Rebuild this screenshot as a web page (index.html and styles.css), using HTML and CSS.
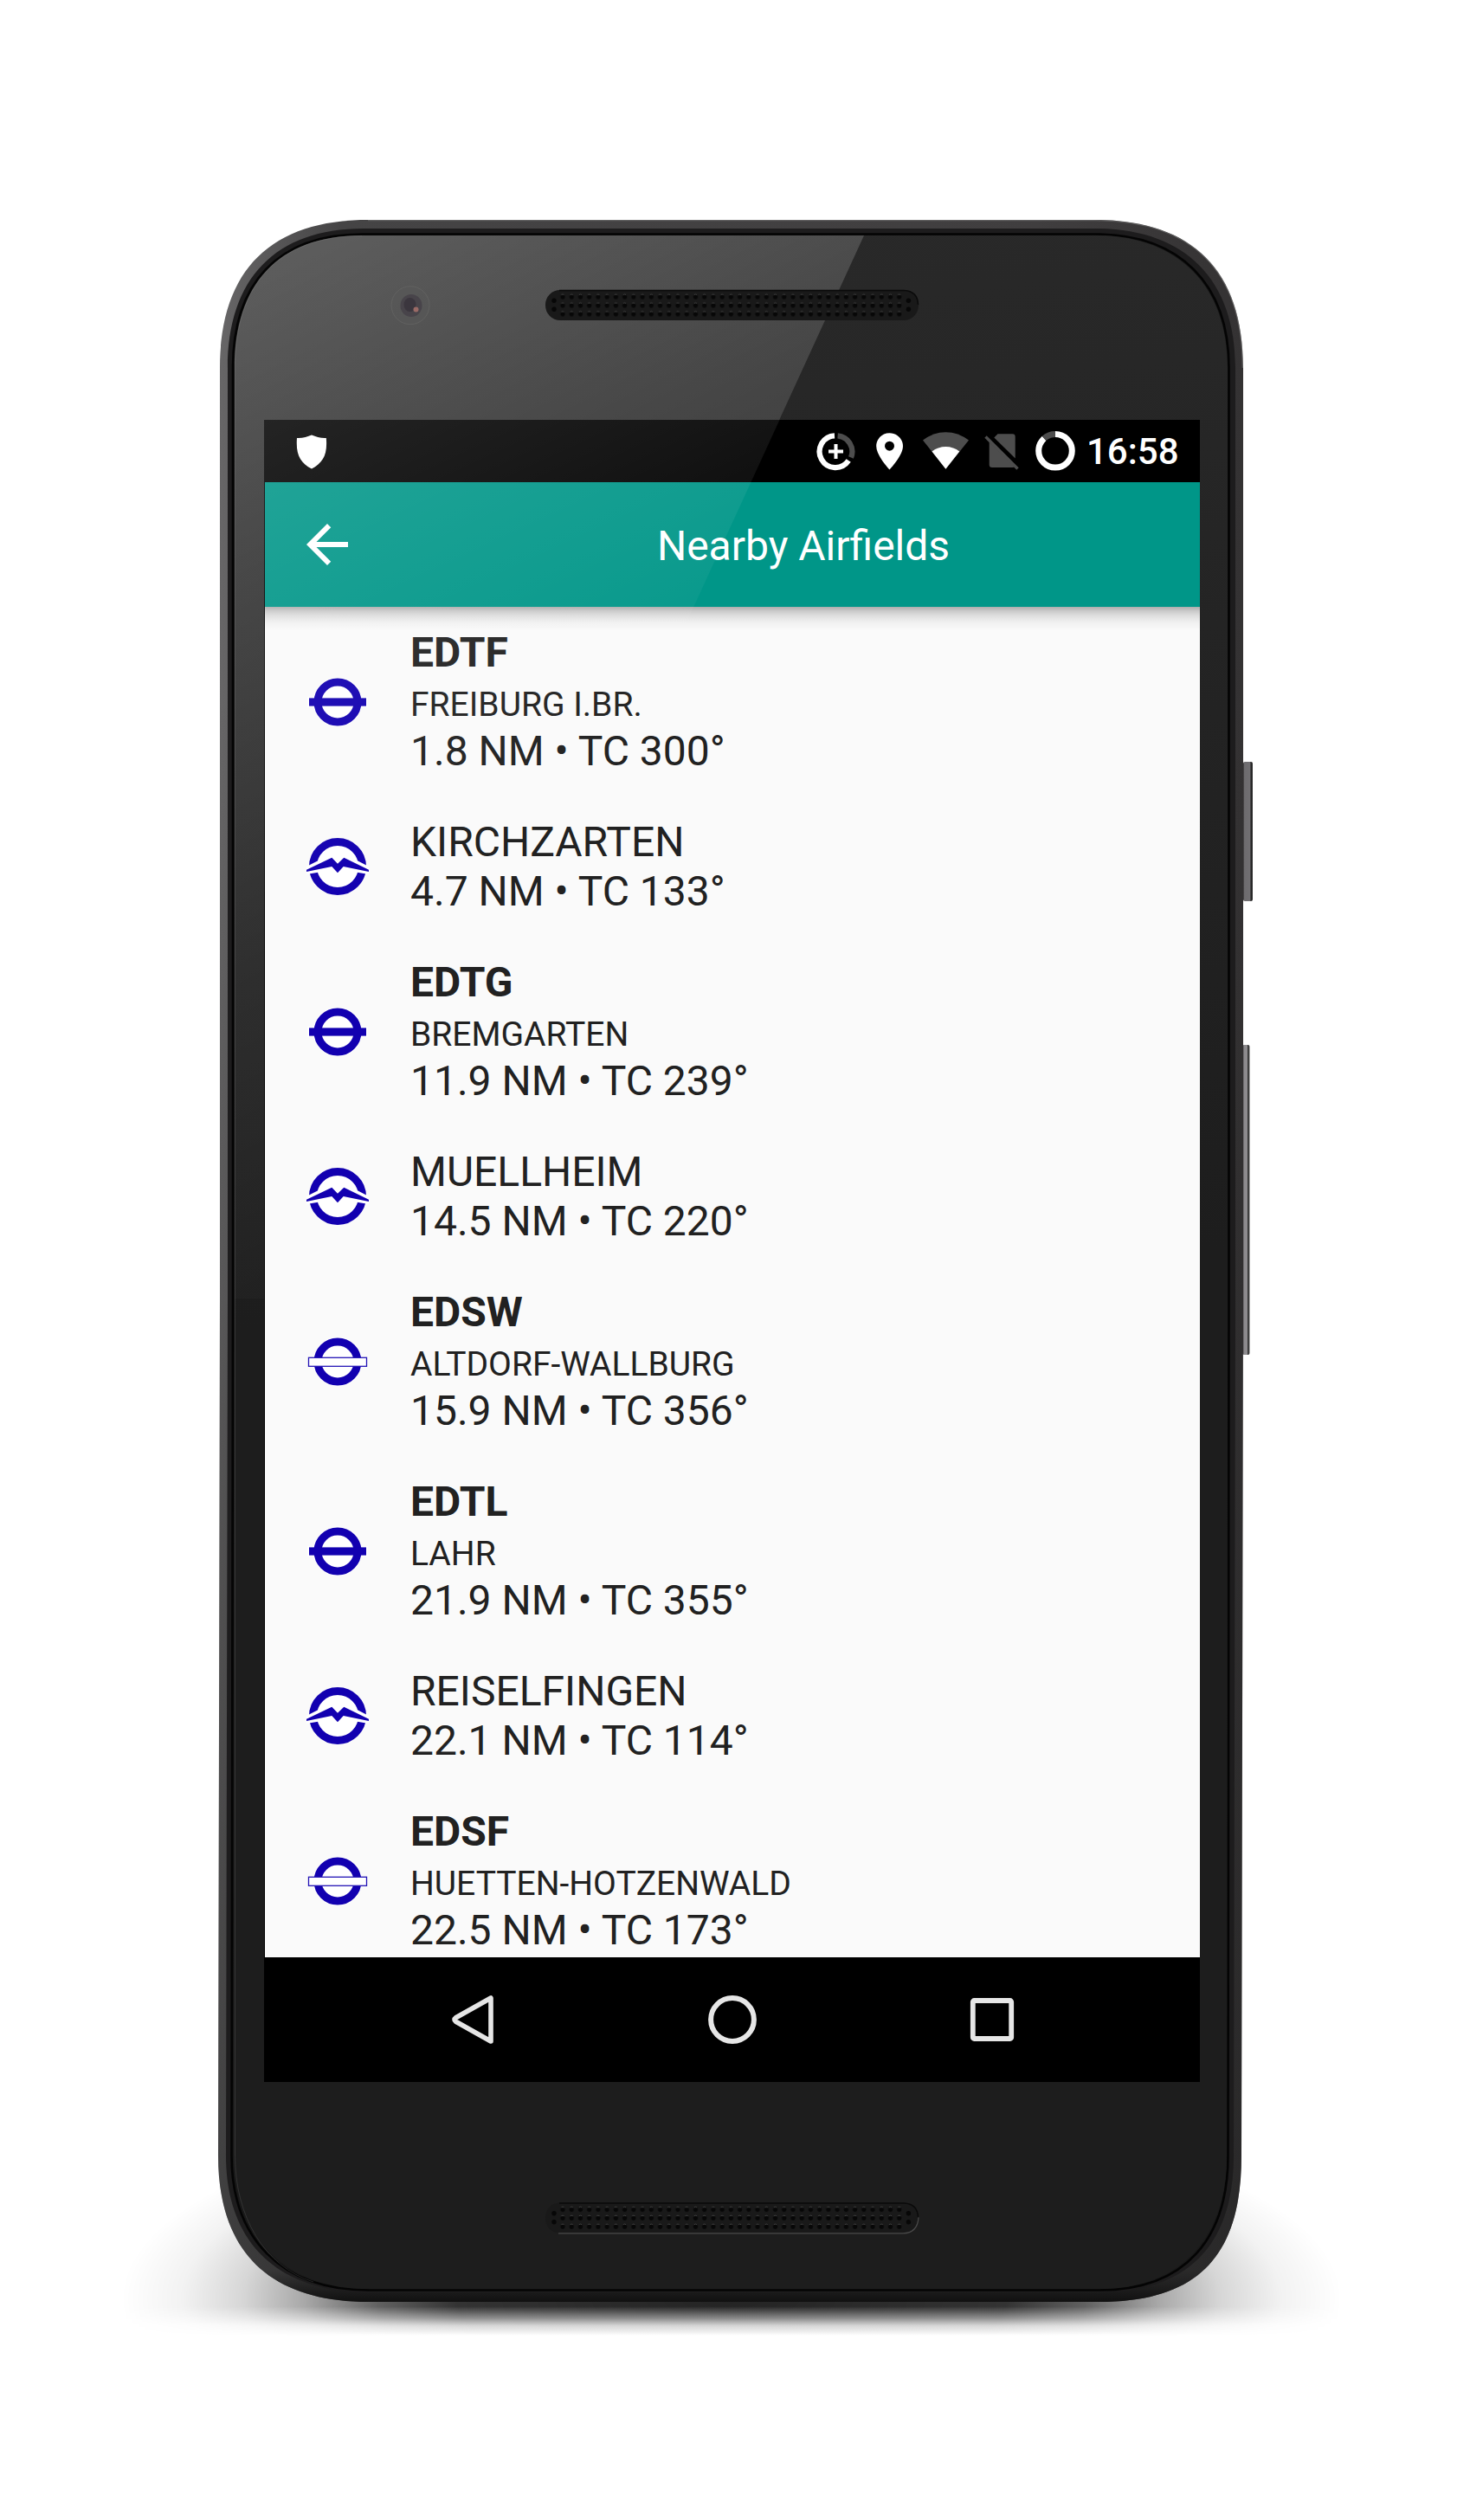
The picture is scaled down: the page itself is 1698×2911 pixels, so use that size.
FILE: index.html
```html
<!DOCTYPE html>
<html lang="en">
<head>
<meta charset="utf-8">
<title>Nearby Airfields</title>
<link rel="stylesheet" href="styles.css">
</head>
<body>
<svg class="defs" aria-hidden="true">
  <symbol id="paved" viewBox="-36 -36 72 72">
    <circle r="28.5" fill="#fff"/><rect x="-34.5" y="-6" width="69" height="12" fill="#fff"/>
    <circle r="23" fill="none" stroke="#1200b0" stroke-width="9"/>
    <rect x="-33" y="-4.6" width="66" height="9.2" fill="#1200b0"/>
  </symbol>
  <symbol id="grass" viewBox="-36 -36 72 72">
    <circle r="28.5" fill="#fff"/>
    <circle r="23" fill="none" stroke="#1200b0" stroke-width="9"/>
    <rect x="-33.5" y="-4.7" width="67" height="10" fill="#fff" stroke="#2414b6" stroke-width="1.3"/>
  </symbol>
  <symbol id="glider" viewBox="-36 -36 72 72">
    <circle r="28.5" fill="#fff" stroke="#1200b0" stroke-width="9"/>
    <path d="M-37 5 L-6.7 -10.3 L0 -3.3 L7.3 -10.3 L37 5 L6.7 0 L0 7.3 L-6.7 0Z" fill="#fff" stroke="#fff" stroke-width="8"/>
    <path d="M-36 3.8 L-6.7 -10.3 L0 -3.3 L7.3 -10.3 L36 3.8 V6 L6.7 0 L0 7.3 L-6.7 0 L-36 6Z" fill="#1200b0"/>
  </symbol>
</svg>

<main class="phone">
  <svg class="hardware" viewBox="0 0 1698 2911" aria-hidden="true">
    <defs>
      <radialGradient id="floor" gradientUnits="userSpaceOnUse" cx="0" cy="0" r="1" gradientTransform="translate(845 2655) scale(705 235)">
        <stop offset="0" stop-opacity=".86"/><stop offset=".45" stop-opacity=".8"/><stop offset=".58" stop-opacity=".62"/><stop offset=".7" stop-opacity=".34"/><stop offset=".8" stop-opacity=".16"/><stop offset=".9" stop-opacity=".05"/><stop offset="1" stop-opacity="0"/>
      </radialGradient>
      <linearGradient id="cut" gradientUnits="userSpaceOnUse" x1="0" y1="2640" x2="0" y2="2698">
        <stop offset="0" stop-color="#fff"/><stop offset=".42" stop-color="#fff"/><stop offset=".66" stop-color="#888"/><stop offset=".8" stop-color="#333"/><stop offset="1" stop-color="#000"/>
      </linearGradient>
      <mask id="floorMask" maskUnits="userSpaceOnUse" x="100" y="2400" width="1500" height="320"><rect x="100" y="2400" width="1500" height="320" fill="url(#cut)"/></mask>
      <linearGradient id="rim" gradientUnits="userSpaceOnUse" x1="252" y1="0" x2="1436" y2="0">
        <stop offset="0" stop-color="#676667"/><stop offset=".12" stop-color="#454445"/><stop offset=".8" stop-color="#403e3f"/><stop offset="1" stop-color="#343233"/>
      </linearGradient>
      <linearGradient id="rimShade" gradientUnits="userSpaceOnUse" x1="0" y1="800" x2="0" y2="2659">
        <stop offset="0" stop-color="#222" stop-opacity="0"/><stop offset=".8" stop-color="#222" stop-opacity=".45"/><stop offset=".98" stop-color="#222" stop-opacity=".6"/><stop offset="1" stop-color="#101010"/>
      </linearGradient>
      <linearGradient id="glass" gradientUnits="userSpaceOnUse" x1="600" y1="270" x2="700" y2="1500">
        <stop offset="0" stop-color="#292929"/><stop offset="1" stop-color="#1d1d1d"/>
      </linearGradient>
      <linearGradient id="glassShine" gradientUnits="userSpaceOnUse" x1="306" y1="272" x2="850" y2="1380">
        <stop offset="0" stop-color="#fff" stop-opacity=".25"/><stop offset=".3" stop-color="#fff" stop-opacity=".15"/><stop offset=".62" stop-color="#fff" stop-opacity=".06"/><stop offset="1" stop-color="#fff" stop-opacity="0"/>
      </linearGradient>
      <linearGradient id="button" x1="0" x2="1" y1="0" y2="0">
        <stop offset="0" stop-color="#2e2c2d"/><stop offset=".12" stop-color="#6d6b6e"/><stop offset=".72" stop-color="#716f72"/><stop offset=".82" stop-color="#222"/><stop offset="1" stop-color="#333"/>
      </linearGradient>
      <linearGradient id="rocker" x1="0" x2="1" y1="0" y2="0">
        <stop offset="0" stop-color="#2e2c2d"/><stop offset=".25" stop-color="#8d8b8e"/><stop offset=".65" stop-color="#8d8b8e"/><stop offset=".75" stop-color="#333"/><stop offset="1" stop-color="#555"/>
      </linearGradient>
      <pattern id="holes" patternUnits="userSpaceOnUse" x="644.9" y="337.8" width="10.23" height="9.9">
        <ellipse cx="5.1" cy="4.95" rx="2.7" ry="2.9" fill="#070707"/><path d="M3.4 2.8 Q5 1.4 6.8 2.8" fill="none" stroke="#484848" stroke-width=".9"/>
      </pattern>
      <g id="speaker">
        <rect x="630" y="335" width="431" height="35" rx="17" fill="#191919"/>
        <path d="M646 335.5H1044Q1060 336 1060.5 352" fill="none" stroke="#0a0a0a" stroke-width="1.5"/>
        <rect x="644.9" y="337.8" width="398.97" height="29.7" fill="url(#holes)"/>
        <g fill="#070707"><circle cx="640" cy="347.3" r="2.7"/><circle cx="640" cy="357.3" r="2.7"/><circle cx="1049.4" cy="347.3" r="2.7"/><circle cx="1049.4" cy="357.3" r="2.7"/></g>
      </g>
    </defs>
    <rect x="100" y="2400" width="1500" height="320" fill="url(#floor)" mask="url(#floorMask)"/>
    <rect x="1436" y="880" width="11" height="161" rx="2" fill="url(#button)"/>
    <rect x="1435" y="1207" width="8.5" height="358" rx="2" fill="url(#rocker)"/>
    <path d="M425 254H1265C1375 254 1436 310 1436 425V1500L1434 2490C1434 2600 1390 2659 1270 2659H426C310 2659 252 2600 252 2490L254 1500V425C254 310 315 254 425 254Z" fill="url(#rim)"/>
    <path d="M425 254H1265C1375 254 1436 310 1436 425V1500L1434 2490C1434 2600 1390 2659 1270 2659H426C310 2659 252 2600 252 2490L254 1500V425C254 310 315 254 425 254Z" fill="url(#rimShade)"/>
    <path d="M425 254.700H1265C1375 254.700 1435.300 310 1435.300 425" fill="none" stroke="#777" stroke-opacity=".6" stroke-width="1.2"/>
    <path d="M420 264H1265C1368 264 1427 322 1427 425V1500L1425 2490C1425 2590 1375 2648 1270 2648H426C320 2648 261 2590 261 2490L263 1500V425C263 322 318 264 420 264Z" fill="#1d1c1d"/>
    <path d="M419 270.500H1265C1363 270.500 1419.500 328 1419.500 425V1500L1418.500 2490C1418.500 2585 1370 2645.500 1270 2645.500H426C324 2645.500 267.500 2585 267.500 2490L269 1500V425C269 328 320 270.500 419 270.500Z" fill="#191919" stroke="#040404" stroke-width="2.6"/>
    <path d="M418 272H1265C1361 272 1418 330 1418 425V1500L1417 2490C1417 2580 1368 2644 1270 2644H426C326 2644 270.500 2580 270.500 2490L271 1500V425C271 330 320 272 418 272Z" fill="url(#glass)"/>
    <path d="M418 272H998L801 701 435 1500H271V425C271 330 320 272 418 272Z" fill="url(#glassShine)"/>
    <path d="M271.500 2490V425C271.500 330 320 272.500 418 272.500" fill="none" stroke="#888" stroke-opacity=".25"/>
    <path d="M271.500 2490C271.500 2560 305 2618 362 2636" fill="none" stroke="#555" stroke-opacity=".4"/>
    <circle cx="474" cy="352.700" r="22" fill="#575758" fill-opacity=".65" stroke="#696967" stroke-opacity=".6"/>
    <ellipse cx="475" cy="353" rx="12.500" ry="13" fill="#48444a"/>
    <ellipse cx="473.500" cy="352" rx="7" ry="8" fill="#3b363e"/>
    <circle cx="480.500" cy="357.500" r="3" fill="#9a6a66"/>
    <use href="#speaker"/>
    <g transform="translate(0 2209.4)"><use href="#speaker"/><path d="M645 370.500H1043Q1060 370 1061 352" fill="none" stroke="#4a4a4a" stroke-width="1.2"/></g>
  </svg>

  <section class="screen">
    <header class="status">
      <svg class="shield" width="36" height="40" viewBox="342 501.500 36 40"><path d="M343 505.500C349 506 355 504 360 502C365 504 371 506 376.800 505.500C378.500 525 373 534 360 541C347 534 341.500 525 343 505.500Z" fill="#fff"/></svg>
      <div class="status-icons">
        <svg width="60" height="72" viewBox="940 485 60 72" fill="none">
          <path d="M964 503.300A18.400 18.400 0 1 0 980.200 532.100" stroke="#fff" stroke-width="6.200"/>
          <path d="M967.600 503.300A18.400 18.400 0 0 1 983 528.500" stroke="#4d4d4d" stroke-width="6.200"/>
          <path d="M957 521.500H974M965.500 513V530" stroke="#fff" stroke-width="4"/>
        </svg>
        <svg width="55" height="72" viewBox="1000 485 55 72"><path fill="#fff" fill-rule="evenodd" d="M1027.500 500.200C1019 500.200 1012.200 506.800 1012.200 515.300C1012.200 526.500 1027.500 542.600 1027.500 542.600S1043 526.500 1043 515.300C1043 506.800 1036 500.200 1027.500 500.200ZM1027.500 520.700A5.500 5.500 0 1 1 1027.500 509.700A5.500 5.500 0 0 1 1027.500 520.700Z"/></svg>
        <svg width="73" height="72" viewBox="1055 485 73 72"><path fill="#4d4d4d" d="M1092.400 541.800L1066 508.600Q1078 499.200 1092.400 499.200T1119 508.600Z"/><path fill="#fff" d="M1092.400 541.800L1076.500 521.500Q1083.500 516 1092.400 516T1108.300 521.500Z"/></svg>
        <svg width="59" height="72" viewBox="1128 485 59 72"><path fill="#4d4d4d" d="M1152.500 501.300H1169.500Q1172.700 501.300 1172.700 504.500V529.500L1148.300 505.500ZM1142.700 510.500L1172 539Q1171 540 1169.500 540H1146Q1142.700 540 1142.700 536.800Z"/><path d="M1138.500 504.500L1175.500 541.500" stroke="#4d4d4d" stroke-width="3.400"/></svg>
        <svg width="63" height="72" viewBox="1187 485 63 72" fill="none"><circle cx="1219" cy="520.800" r="19.300" stroke="#fff" stroke-width="7"/><path d="M1219 501.500A19.300 19.300 0 0 0 1206.100 506.400" stroke="#000" stroke-width="8"/><path d="M1219 501.500A19.300 19.300 0 0 0 1206.100 506.400" stroke="#4d4d4d" stroke-width="7"/></svg>
        <time class="clock">16:58</time>
      </div>
    </header>
    <div class="toolbar">
      <svg class="back" width="72" height="72" viewBox="0 0 24 24" fill="#fff"><path d="M20 11H7.830l5.590-5.590L12 4l-8 8 8 8 1.410-1.410L7.830 13H20v-2z"/></svg>
      <h1 class="title">Nearby Airfields</h1>
    </div>
    <ul class="list">
      <li class="row"><svg class="symbol"><use href="#paved"/></svg><div class="info"><div class="code">EDTF</div><div><span class="name">FREIBURG I.BR.</span></div><div>1.8 NM • TC 300°</div></div></li>
      <li class="row"><svg class="symbol"><use href="#glider"/></svg><div class="info"><div>KIRCHZARTEN</div><div>4.7 NM • TC 133°</div></div></li>
      <li class="row"><svg class="symbol"><use href="#paved"/></svg><div class="info"><div class="code">EDTG</div><div><span class="name">BREMGARTEN</span></div><div>11.9 NM • TC 239°</div></div></li>
      <li class="row"><svg class="symbol"><use href="#glider"/></svg><div class="info"><div>MUELLHEIM</div><div>14.5 NM • TC 220°</div></div></li>
      <li class="row"><svg class="symbol"><use href="#grass"/></svg><div class="info"><div class="code">EDSW</div><div><span class="name">ALTDORF-WALLBURG</span></div><div>15.9 NM • TC 356°</div></div></li>
      <li class="row"><svg class="symbol"><use href="#paved"/></svg><div class="info"><div class="code">EDTL</div><div><span class="name">LAHR</span></div><div>21.9 NM • TC 355°</div></div></li>
      <li class="row"><svg class="symbol"><use href="#glider"/></svg><div class="info"><div>REISELFINGEN</div><div>22.1 NM • TC 114°</div></div></li>
      <li class="row"><svg class="symbol"><use href="#grass"/></svg><div class="info"><div class="code">EDSF</div><div><span class="name">HUETTEN-HOTZENWALD</span></div><div>22.5 NM • TC 173°</div></div></li>
    </ul>
    <nav class="navbar">
      <svg width="72" height="72" viewBox="-36 -36 72 72"><path d="M21 -25V25L-19.500 2.200Q-22.500 0 -19.500 -2.200Z" fill="none" stroke="#e6e6e6" stroke-width="5.600" stroke-linejoin="round"/></svg>
      <svg width="72" height="72" viewBox="-36 -36 72 72"><circle r="24.900" fill="none" stroke="#e6e6e6" stroke-width="6"/></svg>
      <svg width="72" height="72" viewBox="-36 -36 72 72"><rect x="-22.200" y="-22" width="44.400" height="44" rx="1.500" fill="none" stroke="#e6e6e6" stroke-width="5.800"/></svg>
    </nav>
  </section>

  <svg class="gloss" viewBox="0 0 1698 2911" aria-hidden="true">
    <defs><linearGradient id="shine" gradientUnits="userSpaceOnUse" x1="306" y1="290" x2="615" y2="955"><stop offset="0" stop-color="#fff" stop-opacity=".186"/><stop offset="1" stop-color="#fff" stop-opacity="0"/></linearGradient></defs>
    <path d="M305 485H900.500L650 1030H305Z" fill="url(#shine)"/>
  </svg>
</main>
</body>
</html>
```
FILE: styles.css
```css
* { box-sizing: border-box; }

body {
  margin: 0;
  background: #fff;
  font-family: Roboto, "Noto Sans", sans-serif;
}

.defs { position: absolute; width: 0; height: 0; }

.phone {
  position: relative;
  width: 1698px;
  height: 2911px;
  padding: 485px 312px 0 305px;
  overflow: hidden;
}

/* Device artwork beneath and glass reflection above the screen */
.hardware,
.gloss {
  position: absolute;
  inset: 0;
  width: 1698px;
  height: 2911px;
  pointer-events: none;
}

.screen {
  position: relative;
  display: flex;
  flex-direction: column;
  width: 1081px;
  height: 1920px;
  padding-left: 1px;
  background: #000;
  color: #212121;
  font-size: 48px;
  line-height: 57px;
}

.screen svg { display: block; flex: none; }

.status {
  display: flex;
  justify-content: space-between;
  height: 72px;
  flex: none;
}

.shield { margin: 16.5px 0 0 36px; }

.status-icons { display: flex; }

.clock {
  width: 136px;
  padding-left: 5px;
  color: #fff;
  font-size: 42px;
  font-weight: 500;
  line-height: 73px;
}

.toolbar {
  position: relative;
  display: flex;
  align-items: center;
  flex: none;
  height: 144px;
  padding-left: 36px;
  background: #009688;
  color: #fff;
}

.toolbar::after {
  content: "";
  position: absolute;
  top: 100%;
  left: 0;
  right: 0;
  height: 28px;
  background: linear-gradient(rgba(0,0,0,.31), rgba(0,0,0,.19) 18%, rgba(0,0,0,.1) 40%, rgba(0,0,0,.035) 66%, rgba(0,0,0,0));
}

.title {
  flex: 1;
  margin: 0;
  padding: 3px 0 0 56px;
  text-align: center;
  font-size: 48px;
  font-weight: 400;
}

.list {
  flex: 1;
  min-height: 0;
  margin: 0;
  padding: 0;
  overflow: hidden;
  list-style: none;
  background: #fafafa;
}

.row {
  display: flex;
  align-items: center;
  gap: 48px;
  padding: 24px 48px;
}

.symbol { width: 72px; height: 72px; }

.code { font-weight: 700; }

.name { font-size: 39px; line-height: 1; }

.navbar {
  display: flex;
  justify-content: center;
  align-items: center;
  gap: 228px;
  flex: none;
  height: 144px;
}
```
